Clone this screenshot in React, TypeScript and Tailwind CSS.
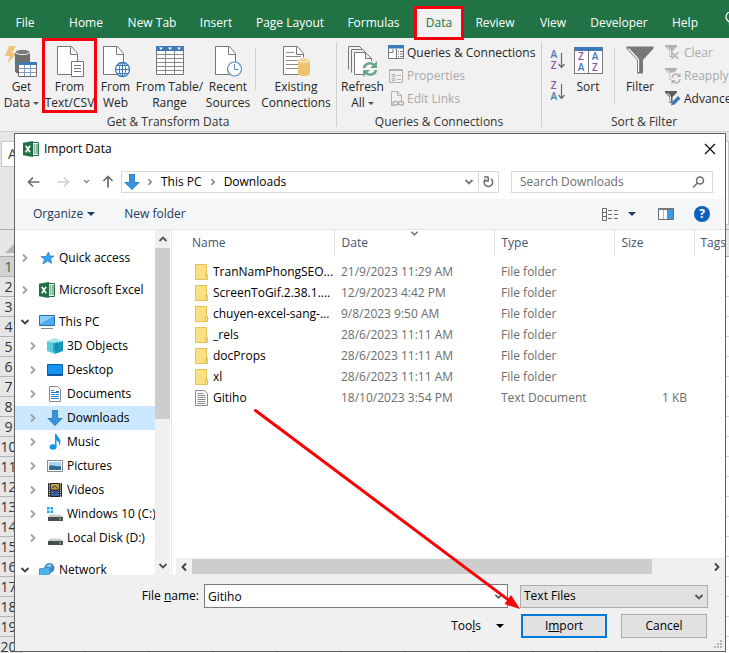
import { ReactNode, useState } from 'react';
import clsx from 'clsx';

type Kind =
  | 'star'
  | 'excel'
  | 'pc'
  | 'cube'
  | 'desktop'
  | 'documents'
  | 'downloads'
  | 'music'
  | 'pictures'
  | 'videos'
  | 'windows'
  | 'disk'
  | 'network';

interface TreeNode {
  label: string;
  kind: Kind;
  child?: boolean;
  open?: boolean;
  gap?: boolean;
}

interface FileRow {
  name: string;
  date: string;
  type: string;
  size?: string;
}

const tabs = [
  { label: 'File', width: 'w-[50px]' },
  { label: 'Home', width: 'w-[72px]' },
  { label: 'New Tab', width: 'w-[60px]' },
  { label: 'Insert', width: 'w-[68px]' },
  { label: 'Page Layout', width: 'w-[80px]' },
  { label: 'Formulas', width: 'w-[87px]' },
  { label: 'Data', width: 'w-[44px]' },
  { label: 'Review', width: 'w-[68px]' },
  { label: 'View', width: 'w-[48px]' },
  { label: 'Developer', width: 'w-[84px]' },
  { label: 'Help', width: 'w-[48px]' },
];

const tree: TreeNode[] = [
  { label: 'Quick access', kind: 'star', gap: true },
  { label: 'Microsoft Excel', kind: 'excel', gap: true },
  { label: 'This PC', kind: 'pc', open: true },
  { label: '3D Objects', kind: 'cube', child: true },
  { label: 'Desktop', kind: 'desktop', child: true },
  { label: 'Documents', kind: 'documents', child: true },
  { label: 'Downloads', kind: 'downloads', child: true },
  { label: 'Music', kind: 'music', child: true },
  { label: 'Pictures', kind: 'pictures', child: true },
  { label: 'Videos', kind: 'videos', child: true },
  { label: 'Windows 10 (C:)', kind: 'windows', child: true },
  { label: 'Local Disk (D:)', kind: 'disk', child: true, gap: true },
  { label: 'Network', kind: 'network', open: true },
];

const files: FileRow[] = [
  { name: 'TranNamPhongSEO...', date: '21/9/2023 11:29 AM', type: 'File folder' },
  { name: 'ScreenToGif.2.38.1....', date: '12/9/2023 4:42 PM', type: 'File folder' },
  { name: 'chuyen-excel-sang-...', date: '9/8/2023 9:50 AM', type: 'File folder' },
  { name: '_rels', date: '28/6/2023 11:11 AM', type: 'File folder' },
  { name: 'docProps', date: '28/6/2023 11:11 AM', type: 'File folder' },
  { name: 'xl', date: '28/6/2023 11:11 AM', type: 'File folder' },
  { name: 'Gitiho', date: '18/10/2023 3:54 PM', type: 'Text Document', size: '1 KB' },
];

const Chevron = ({ dir, className, size = 10 }: { dir: 'up' | 'down' | 'left' | 'right'; className?: string; size?: number }) => {
  const paths = {
    up: 'M1.5 7 5 3.5 8.5 7',
    down: 'M1.5 3 5 6.5 8.5 3',
    left: 'M7 1.5 3.5 5 7 8.5',
    right: 'M3 1.5 6.5 5 3 8.5',
  };
  return (
    <svg width={size} height={size} viewBox="0 0 10 10" className={clsx('shrink-0', className)} fill="none" stroke="currentColor" strokeWidth="1.8">
      <path d={paths[dir]} />
    </svg>
  );
};

const Caret = ({ className, small }: { className?: string; small?: boolean }) => (
  <svg width={small ? 6 : 8} height={small ? 3 : 4} viewBox="0 0 8 4" className={clsx('inline-block shrink-0', className)} fill="currentColor">
    <path d="M0 0h8L4 4z" />
  </svg>
);

const ExcelIcon = ({ className }: { className?: string }) => (
  <svg width="16" height="16" viewBox="0 0 16 16" className={className}>
    <path d="M9.500 1.500h6v13h-6z" fill="#fff" stroke="#217346" strokeWidth="1" />
    <path d="M10.500 4h2M10.500 6h2M10.500 8h2M10.500 10h2M10.500 12h2M13 4h2M13 6h2M13 8h2M13 10h2M13 12h2" stroke="#217346" strokeWidth="1" />
    <path d="M0 1.800 10 0v16L0 14.200z" fill="#1e7145" />
    <path d="m2.700 4.700 4.400 6.600M7.100 4.700l-4.400 6.600" stroke="#fff" strokeWidth="1.600" />
  </svg>
);

const page = 'M1.5.5h14l6 7v21h-20z';

const GetDataIcon = () => (
  <svg width="34" height="32" viewBox="0 0 34 32">
    <path d="M4 0h7L7 7h5L2 18l3-8H0z" fill="#f0c277" />
    <path d="M10 6v19c0 2 3 3 8 3l7-12V6z" fill="#6e6e6e" />
    <ellipse cx="17.500" cy="6" rx="7.500" ry="2.600" fill="#7b7b7b" stroke="#f1f1f1" />
    <path d="M13.500 16.500h18v14h-18z" fill="#fff" stroke="#6e6e6e" />
    <path d="M13 16h19v3H13z" fill="#3f79b7" />
    <path d="M14 22.500h17M14 26.500h17M19.500 19v11M25.500 19v11" stroke="#7a9cc6" />
  </svg>
);

const TextCsvIcon = () => (
  <svg width="28" height="32" viewBox="0 0 28 32">
    <path d={page} fill="#fff" stroke="#777" />
    <path d="M14.500.500v8h7" fill="none" stroke="#777" />
    <path d="M15.500 15.500h12v15h-12z" fill="#fff" stroke="#777" />
    <path d="M18 19.500h7M18 22.500h7M18 25.500h7" stroke="#777" />
  </svg>
);

const WebIcon = () => (
  <svg width="28" height="32" viewBox="0 0 28 32">
    <path d={page} fill="#fff" stroke="#777" />
    <path d="M14.500.500v8h7" fill="none" stroke="#777" />
    <circle cx="20.500" cy="23.500" r="7" fill="#fff" stroke="#3f79b7" strokeWidth="1.300" />
    <ellipse cx="20.500" cy="23.500" rx="3.200" ry="7" fill="none" stroke="#3f79b7" />
    <path d="M20.500 16.500v14M13.500 23.500h14M15 19.500h11M15 27.500h11" stroke="#3f79b7" />
  </svg>
);

const TableIcon = () => (
  <svg width="28" height="32" viewBox="0 0 28 32">
    <path d="M.500.500h27v28h-27z" fill="#fff" stroke="#777" />
    <path d="M0 0h28v5H0z" fill="#3f79b7" />
    <path d="M3 1.500h4l-2 2.500zM12 1.500h4l-2 2.500zM21 1.500h4l-2 2.500z" fill="#fff" />
    <path d="M1 8.500h26M1 12.500h26M1 16.500h26M1 20.500h26M1 24.500h26M9.500 5v23M18.500 5v23" stroke="#8a8a8a" />
  </svg>
);

const RecentIcon = () => (
  <svg width="28" height="32" viewBox="0 0 28 32">
    <path d={page} fill="#fff" stroke="#777" />
    <path d="M14.500.500v8h7" fill="none" stroke="#777" />
    <circle cx="20.500" cy="23" r="7" fill="#fff" stroke="#5b8cc4" strokeWidth="1.200" />
    <path d="M20.500 18v5.500h4" fill="none" stroke="#5b8cc4" />
  </svg>
);

const ConnectionsIcon = () => (
  <svg width="28" height="32" viewBox="0 0 28 32">
    <path d={page} fill="#fff" stroke="#777" />
    <path d="M14.500.500v8h7" fill="none" stroke="#777" />
    <path d="M4 6.500h8M4 10.500h15M4 14.500h12M4 18.500h12M4 22.500h12" stroke="#8a8a8a" />
    <path d="M16 14v14c0 1 2.500 2 6 2s6-1 6-2V14z" fill="#eec36f" />
    <ellipse cx="22" cy="14" rx="6" ry="2.200" fill="#f3d38f" stroke="#fff" strokeWidth=".800" />
  </svg>
);

const RefreshIcon = () => (
  <svg width="30" height="32" viewBox="0 0 30 32" fill="#fff" stroke="#777">
    <path d="M.500 23.500V.500h11l3 3" fill="none" />
    <path d="M3.500 26.500v-23h11l3 3" fill="none" />
    <path d="M6.500 6.500h11l6 6v16h-17zM17.500 6.500v6h6" />
    <circle cx="22" cy="23" r="8" fill="#f6f6f6" stroke="none" />
    <path d="M16 22c.5-4 6-6.500 10-3M28 24c-.5 4-6 6.500-10 3" fill="none" stroke="#6aa889" strokeWidth="2.600" />
    <path d="M29 15v7h-7zM15 31v-7h7z" fill="#6aa889" stroke="none" />
  </svg>
);

const FilterIcon = () => (
  <svg width="28" height="30" viewBox="0 0 28 30">
    <path d="M.500.500h27v2L17 14v13.500h-6V14L.500 2.500z" fill="#777" />
    <path d="M2.500 2.500 12.500 13.500V26" fill="none" stroke="#fff" strokeWidth="1.200" />
  </svg>
);

const MiniFunnel = ({ mark }: { mark: 'x' | 'loop' | 'pen' }) => {
  const color = mark === 'pen' ? '#5f5f5f' : '#b1b1b1';
  return (
    <svg width="16" height="16" viewBox="0 0 16 16" fill="none">
      <path d="M0 0h12v1.500L7.500 6v6h-3V6L0 1.500z" fill={color} />
      <path d="M2.500 2 5.500 5.500V11" stroke="#f1f1f1" />
      {mark === 'x' && <path d="m6.500 7 7 7m0-7-7 7" stroke={color} strokeWidth="1.500" />}
      {mark === 'loop' && (
        <>
          <path d="M6 4.500h10V16H6z" fill="#f1f1f1" />
          <path d="M7 10a4 4 0 0 1 7-2.500M15 11a4 4 0 0 1-7 2.500" stroke={color} strokeWidth="1.500" />
          <path d="M15.500 5v4h-4zM6.500 16v-4h4z" fill={color} />
        </>
      )}
      {mark === 'pen' && <path d="m6 14.500 1-3.500 6-6 2.500 2.500-6 6z" fill="#3f79b7" />}
    </svg>
  );
};

const SortLetters = ({ top, bottom }: { top: string; bottom: string }) => (
  <span className="flex flex-col items-center text-[10px] leading-[11px] font-semibold">
    <span className={top === 'A' ? 'text-[#3f79b7]' : 'text-[#8e4fa8]'}>{top}</span>
    <span className={bottom === 'A' ? 'text-[#3f79b7]' : 'text-[#8e4fa8]'}>{bottom}</span>
  </span>
);

const SortButton = ({ top, bottom, label }: { top: string; bottom: string; label: string }) => (
  <button aria-label={label} className="flex items-center gap-px">
    <SortLetters top={top} bottom={bottom} />
    <svg width="7" height="17" viewBox="0 0 7 17" fill="none" stroke="#6a6a6a" strokeWidth="1.200">
      <path d="M3.500 1v14M.500 12l3 3.500 3-3.500" />
    </svg>
  </button>
);

const BigButton = ({ icon, lines, width, caret, marked }: { icon: ReactNode; lines: string[]; width: string; caret?: boolean; marked?: boolean }) => (
  <button className={clsx('relative flex shrink-0 flex-col items-center pt-2', width)}>
    <span className="flex h-[33px] items-start">{icon}</span>
    {lines.map((line, i) => (
      <span key={line} className="flex items-center whitespace-nowrap leading-4">
        {line}
        {caret && i === lines.length - 1 && <Caret small className="ml-[3px] text-[#555]" />}
      </span>
    ))}
    {marked && <span className="absolute -inset-x-px top-0 h-[75px] border-3 border-[#f5000d]" />}
  </button>
);

const SmallButton = ({ icon, label, disabled }: { icon: ReactNode; label: string; disabled?: boolean }) => (
  <button disabled={disabled} className={clsx('flex h-[23px] items-center gap-[3px] whitespace-nowrap', disabled && 'text-[#a9a9a9]')}>
    {icon}
    {label}
  </button>
);

const Group = ({ title, width, children }: { title: string; width: string; children: ReactNode }) => (
  <section className={clsx('flex shrink-0 flex-col', width)}>
    <div className="flex h-[75px]">{children}</div>
    <h2 className="text-center leading-[18px] text-[#333]">{title}</h2>
  </section>
);

const Ribbon = () => (
  <header className="shrink-0 overflow-hidden bg-[#f1f1f1]">
    <nav className="flex h-[38px] bg-[#217346] pt-2 text-white">
      {tabs.map((tab) => (
        <button
          key={tab.label}
          className={clsx('relative shrink-0 whitespace-nowrap', tab.width, tab.label === 'Data' && 'bg-[#f1f1f1] text-[#217346]')}
        >
          {tab.label}
          {tab.label === 'Data' && <span className="absolute -inset-x-[3px] -top-0.5 -bottom-0.5 z-10 border-3 border-[#f5000d]" />}
        </button>
      ))}
      <svg width="14" height="18" viewBox="0 0 14 18" className="mt-1 ml-4 shrink-0" fill="none" stroke="#fff" strokeWidth="1.200">
        <path d="M4.500 13v-3C2 8.500 1 7 1 5a5.500 5.500 0 0 1 11 0c0 2-1 3.500-3.500 5v3zM5 15.500h3" />
      </svg>
    </nav>
    <div className="flex text-[#262626]">
      <Group title="Get & Transform Data" width="w-[336px]">
        <BigButton icon={<GetDataIcon />} lines={['Get', 'Data']} width="w-[43px]" caret />
        <BigButton icon={<TextCsvIcon />} lines={['From', 'Text/CSV']} width="w-[53px]" marked />
        <BigButton icon={<WebIcon />} lines={['From', 'Web']} width="w-[39px]" />
        <BigButton icon={<TableIcon />} lines={['From Table/', 'Range']} width="w-[69px]" />
        <BigButton icon={<RecentIcon />} lines={['Recent', 'Sources']} width="w-[48px]" />
        <span className="mx-[3px] mt-[10px] h-[42px] w-px bg-[#d0d0d0]" />
        <BigButton icon={<ConnectionsIcon />} lines={['Existing', 'Connections']} width="w-[74px]" />
      </Group>
      <span className="mt-1 mb-1 w-px shrink-0 bg-[#cfcfcf]" />
      <Group title="Queries & Connections" width="w-[204px]">
        <BigButton icon={<RefreshIcon />} lines={['Refresh', 'All']} width="w-[51px]" caret />
        <div className="flex flex-col pt-[3px]">
          <SmallButton
            label="Queries & Connections"
            icon={
              <svg width="16" height="15" viewBox="0 0 16 15">
                <path d="M.500.500h15v13h-15z" fill="#fff" stroke="#777" />
                <path d="M0 0h16v3.500H0z" fill="#3f79b7" />
                <path d="M8.500 4v9M1 7.500h4M10 6.500h1M12 6.500h3M10 9h1M12 9h3M10 11.500h1M12 11.500h3M5 4v3.500" stroke="#777" fill="none" />
              </svg>
            }
          />
          <SmallButton
            disabled
            label="Properties"
            icon={
              <svg width="16" height="16" viewBox="0 0 16 16" fill="none" stroke="#b1b1b1">
                <path d="M1.500 1.500h13v13h-13z" />
                <path d="M1.500 2.500h13M4 6.500h3v2H4zM4 10.500h3v2H4zM9 7.500h4M9 11.500h4" />
              </svg>
            }
          />
          <SmallButton
            disabled
            label="Edit Links"
            icon={
              <svg width="16" height="16" viewBox="0 0 16 16" fill="none" stroke="#b1b1b1">
                <path d="M6 14.500H3.500V.500h6l4 4V10M9.500.500v4h4" />
                <rect x="5" y="10.500" width="5" height="3.500" rx="1.700" strokeWidth="1.400" />
                <rect x="10.500" y="10.500" width="5" height="3.500" rx="1.700" strokeWidth="1.400" />
              </svg>
            }
          />
        </div>
      </Group>
      <span className="mt-1 mb-1 w-px shrink-0 bg-[#cfcfcf]" />
      <Group title="Sort & Filter" width="w-[204px]">
        <div className="flex w-[23px] flex-col items-end gap-[9px] pt-[11px]">
          <SortButton top="A" bottom="Z" label="Sort A to Z" />
          <SortButton top="Z" bottom="A" label="Sort Z to A" />
        </div>
        <BigButton
          lines={['Sort']}
          width="w-[46px]"
          icon={
            <span className="mt-px flex h-[27px] w-[29px] border border-t-4 border-[#777] border-t-[#3f79b7] bg-white">
              <span className="flex flex-1 justify-center border-r border-[#777]">
                <SortLetters top="Z" bottom="A" />
              </span>
              <span className="flex flex-1 justify-center">
                <SortLetters top="A" bottom="Z" />
              </span>
            </span>
          }
        />
        <span className="mr-1 mt-[10px] ml-[3px] h-[55px] w-px bg-[#d0d0d0]" />
        <BigButton icon={<FilterIcon />} lines={['Filter']} width="w-[42px]" />
        <div className="flex flex-col pt-[3px] pl-1">
          <SmallButton icon={<MiniFunnel mark="x" />} label="Clear" disabled />
          <SmallButton icon={<MiniFunnel mark="loop" />} label="Reapply" disabled />
          <SmallButton icon={<MiniFunnel mark="pen" />} label="Advanced" />
        </div>
      </Group>
    </div>
  </header>
);

const Sheet = () => (
  <div className="flex-1 overflow-hidden bg-[#e6e6e6]">
    <div className="border-t border-[#cfcfcf] pt-[9px] pb-1">
      <div className="flex items-start justify-between">
        <div className="ml-px h-[26px] w-20 border border-[#c6c6c6] bg-white pl-1.5 text-sm leading-6 text-[#444]">A1</div>
        <div className="h-[84px] w-2/3 border border-[#c6c6c6] bg-white" />
      </div>
    </div>
    <div className="flex h-[28px] border-y border-[#ababab]">
      <svg width="21" height="28" viewBox="0 0 21 28" fill="#b4b4b4">
        <path d="M18 10v13H5z" />
      </svg>
    </div>
    {Array.from({ length: 20 }, (_, i) => i + 1).map((row) => (
      <div key={row} className="flex h-5">
        <div
          className={clsx(
            'w-[22px] shrink-0 border-r border-b border-[#b5b5b5] pr-1 text-center text-sm leading-5',
            row === 1 ? 'bg-[#d2d2d2] text-[#217346]' : 'text-[#333]'
          )}
        >
          {row}
        </div>
        {Array.from({ length: 12 }, (_, c) => (
          <div key={c} className="w-16 shrink-0 border-r border-b border-[#d4d4d4] bg-white" />
        ))}
      </div>
    ))}
  </div>
);

const Arrow = ({ className }: { className?: string }) => (
  <svg width="16" height="16" viewBox="0 0 16 16" className={className}>
    <path d="M5 0h6v8h5l-8 8-8-8h5z" fill="#3b93dd" />
    <path d="M5.500.500h5v8h4.200L8 15.200 1.300 8.500h4.200z" fill="none" stroke="#2b78bd" strokeWidth=".600" />
  </svg>
);

const TreeIcon = ({ kind }: { kind: Kind }) => {
  if (kind === 'excel') return <ExcelIcon />;
  if (kind === 'downloads') return <Arrow />;
  return (
    <svg width="16" height="16" viewBox="0 0 16 16" fill="none" className="shrink-0">
      {kind === 'star' && (
        <path d="m9.500 2 1.300 4H15l-3.400 2.800 1 4.400L8.600 11l-4.800 3 1.800-4.800L2 6.500h5z" fill="#35a3f0" stroke="#1b78c8" strokeWidth=".700" />
      )}
      {kind === 'pc' && (
        <>
          <path d="M.500 1.500h15v10H.500z" fill="#4ea9ee" stroke="#2a6fa8" />
          <path d="M1 2h14L1 10z" fill="#8bd0fa" />
          <path d="M2 14.500h12" stroke="#7c8b98" />
        </>
      )}
      {kind === 'cube' && (
        <>
          <path d="m0 3 8-3 8 3-7 3z" fill="#a5e8f3" />
          <path d="m0 3 8 2.500V16l-8-3z" fill="#56cbe0" />
          <path d="m16 3-8 2.500V16l8-3z" fill="#159ab8" />
          <path d="m6 5 5-1v8l-5 2z" fill="#0e86a5" opacity=".600" />
        </>
      )}
      {kind === 'desktop' && (
        <>
          <path d="M.500 2.500h15v11H.500z" fill="#1295f2" stroke="#0a5da8" />
          <path d="M1 12.500h14" stroke="#0c4f91" />
        </>
      )}
      {kind === 'documents' && (
        <>
          <path d="M2.500.500h8l3 3v12h-11z" fill="#fff" stroke="#8a8a8a" />
          <path d="M4 4.500h3M9 5.500h3M4 6.500h8M4 8.500h4M9 8.500h3M4 10.500h8M4 12.500h8" stroke="#2d83c4" />
        </>
      )}
      {kind === 'music' && (
        <>
          <path d="M8 0h1.500c.5 3 4 4 4 7.500 0 1.500-.5 3-1.500 4 .5-3-.5-4-2.500-5V13H8z" fill="#1495ee" />
          <ellipse cx="6" cy="13" rx="3.500" ry="2.700" fill="#1495ee" />
        </>
      )}
      {kind === 'pictures' && (
        <>
          <path d="M.500 2.500h15v11H.500z" fill="#fff" stroke="#8a8a8a" />
          <path d="M2 4h12v8H2z" fill="#a8d5ef" />
          <path d="M2 8c3-2 6 1 12 0v4H2z" fill="#2f6d93" />
        </>
      )}
      {kind === 'videos' && (
        <>
          <path d="M1 1h14v14H1z" fill="#222" />
          <path d="M2.500 1v14M13.500 1v14" stroke="#e8e8e8" strokeWidth="1.200" strokeDasharray="1.200 1" />
          <path d="M4 2h8v5.500H4z" fill="#bda344" />
          <path d="M4 8.500h8V14H4z" fill="#3d62a0" />
          <path d="m5 6 3-2 3 2.500M6 12l4-3" stroke="#26355c" />
        </>
      )}
      {(kind === 'windows' || kind === 'disk') && (
        <>
          <path d="M3 8.500h10l3 2.500H1z" fill="#c9cbcc" />
          <path d="M1 11h15v4H1z" fill="#4a4d4f" />
          <path d="M12 13h2" stroke="#7be07b" />
        </>
      )}
      {kind === 'windows' && <path d="M0 1h2.500v2.500H0zM3.500 1H6v2.500H3.500zM0 4.500h2.500V7H0zM3.500 4.500H6V7H3.500z" fill="#1ea6e8" />}
      {kind === 'network' && (
        <>
          <circle cx="10.500" cy="6" r="5" fill="#3d8fc9" />
          <path d="M7.500 4c2-2 4-2 5-1l-1 3H9z" fill="#9ed3ef" />
          <path d="m0 7 11-2v7L0 14z" fill="#4fb3ec" stroke="#2b78ad" strokeWidth=".700" />
        </>
      )}
    </svg>
  );
};

const Tree = ({ selected, onSelect }: { selected: string; onSelect: (label: string) => void }) => (
  <div className="flex w-[155px] shrink-0 overflow-hidden">
    <ul className="min-w-0 flex-1 pt-4">
      {tree.map((node) => (
        <li key={node.label} className={clsx(node.gap && 'mb-2')}>
          <button
            onClick={() => onSelect(node.label)}
            className={clsx(
              'flex h-6 w-full items-center gap-[9px] whitespace-nowrap text-black',
              node.child ? 'pl-[13px]' : 'pl-[5px]',
              selected === node.label && 'bg-[#cce8ff]'
            )}
          >
            <Chevron dir={node.open ? 'down' : 'right'} className={node.open ? 'text-[#404040]' : 'text-[#a0a0a0]'} />
            <span className="flex items-center gap-1">
              <TreeIcon kind={node.kind} />
              {node.label}
            </span>
          </button>
        </li>
      ))}
    </ul>
    <div className="flex w-[15px] flex-col items-center bg-[#f0f0f0]">
      <Chevron dir="up" className="my-1 text-[#505050]" />
      <div className="h-[171px] w-full bg-[#cdcdcd]" />
      <Chevron dir="down" className="mt-auto mb-1 text-[#505050]" />
    </div>
  </div>
);

const FileIcon = ({ text }: { text?: boolean }) =>
  text ? (
    <svg width="13" height="16" viewBox="0 0 13 16" className="shrink-0" fill="none" stroke="#8a8a8a">
      <path d="M.500.500h9l3 3v12H.500z" fill="#fff" />
      <path d="M2.500 3.500h6M2.500 5.500h8M2.500 7.500h8M2.500 9.500h8M2.500 11.500h8M2.500 13.500h8" />
    </svg>
  ) : (
    <svg width="13" height="16" viewBox="0 0 13 16" className="shrink-0">
      <path d="M0 0h12v10h1v6H0z" fill="#fbdf83" />
      <path d="M.500.500h11V11M.500.500v15h12v-5h-2v5" fill="none" stroke="#e8bd4f" strokeWidth=".900" />
    </svg>
  );

const FileList = () => (
  <div className="ml-px flex min-w-0 flex-1 flex-col overflow-hidden border-l border-[#e8e8e8]">
    <table className="w-full table-fixed text-left whitespace-nowrap">
      <colgroup>
        <col className="w-[162px]" />
        <col className="w-[160px]" />
        <col className="w-[120px]" />
        <col className="w-[80px]" />
        <col />
      </colgroup>
      <thead className="text-[#44546f]">
        <tr className="h-[26px]">
          <th className="border-r border-[#e2e2e2] pl-5 font-normal">Name</th>
          <th className="relative border-r border-[#e2e2e2] pl-[7px] font-normal">
            Date
            <Chevron dir="down" size={9} className="absolute -top-px left-[75px] text-[#777]" />
          </th>
          <th className="border-r border-[#e2e2e2] pl-[7px] font-normal">Type</th>
          <th className="border-r border-[#e2e2e2] pl-[7px] font-normal">Size</th>
          <th className="pl-1.5 font-normal">Tags</th>
        </tr>
      </thead>
      <tbody className="text-[#6d6d6d]">
        <tr className="h-[5px]" />
        {files.map((file) => (
          <tr key={file.name} className="h-[21px]">
            <td className="pl-[23px] text-black">
              <span className="flex items-center gap-[5px]">
                <FileIcon text={file.type === 'Text Document'} />
                {file.name}
              </span>
            </td>
            <td className="pl-[7px]">{file.date}</td>
            <td className="pl-[7px]">{file.type}</td>
            <td className="pr-[7px] text-right">{file.size}</td>
            <td />
          </tr>
        ))}
      </tbody>
    </table>
    <div className="mt-auto ml-1 flex h-[17px] items-center bg-[#f0f0f0] text-[#404040]">
      <Chevron dir="left" className="mx-[3px]" />
      <div className="h-[15px] flex-1">
        <div className="h-full w-[89%] bg-[#cdcdcd]" />
      </div>
      <Chevron dir="right" className="mx-[3px]" />
    </div>
  </div>
);

const ImportDialog = () => {
  const [folder, setFolder] = useState('Downloads');
  const [fileName, setFileName] = useState('Gitiho');

  return (
    <div
      role="dialog"
      aria-label="Import Data"
      className="absolute top-[133px] right-[3px] bottom-px left-[14px] flex flex-col border border-[#5f6368] bg-white text-black"
    >
      <div className="flex h-[30px] shrink-0 items-center gap-[5px] pr-[9px] pl-2">
        <ExcelIcon />
        <h1>Import Data</h1>
        <button aria-label="Close" className="ml-auto">
          <svg width="12" height="12" viewBox="0 0 12 12" stroke="#000" strokeWidth="1.100">
            <path d="m1 1 10 10M11 1 1 11" />
          </svg>
        </button>
      </div>

      <div className="flex h-[35px] shrink-0 items-center pr-3 pl-3">
        <button aria-label="Back">
          <svg width="13" height="12" viewBox="0 0 13 12" fill="none" stroke="#6b6b6b" strokeWidth="1.700">
            <path d="M12.500 6h-11M6 1.500 1.500 6 6 10.500" />
          </svg>
        </button>
        <button aria-label="Forward" className="ml-[17px]">
          <svg width="13" height="12" viewBox="0 0 13 12" fill="none" stroke="#d0d0d0" strokeWidth="1.700">
            <path d="M.500 6h11M7 1.500 11.500 6 7 10.500" />
          </svg>
        </button>
        <button aria-label="Recent locations" className="ml-[13px] text-[#7a7a7a]">
          <Chevron dir="down" size={7} />
        </button>
        <button aria-label="Up" className="ml-3">
          <svg width="12" height="13" viewBox="0 0 12 13" fill="none" stroke="#6b6b6b" strokeWidth="1.700">
            <path d="M6 12.500v-11M1.500 6 6 1.500 10.500 6" />
          </svg>
        </button>
        <div className="ml-[7px] flex h-[22px] flex-1 items-center border border-[#d9d9d9] pl-0.5">
          <Arrow />
          <Chevron dir="right" size={8} className="ml-1.5 text-[#777]" />
          <button className="ml-[7px]">This PC</button>
          <Chevron dir="right" size={8} className="ml-[7px] text-[#777]" />
          <button className="ml-[7px]">{folder}</button>
          <button aria-label="Previous locations" className="mr-1 ml-auto text-[#777]">
            <Chevron dir="down" />
          </button>
          <button aria-label="Refresh" className="flex h-full w-[20px] items-center justify-center border-l border-[#d9d9d9]">
            <svg width="11" height="12" viewBox="0 0 11 12" fill="none" stroke="#6b6b6b" strokeWidth="1.500">
              <path d="M2.500 3A4.300 4.300 0 1 0 8 2.800" />
              <path d="M5 1h-4M5.200 0.500v4.500H1" />
            </svg>
          </button>
        </div>
        <div className="ml-3 flex h-[22px] w-[202px] items-center border border-[#d9d9d9] pr-[7px] pl-2">
          <input aria-label="Search Downloads" placeholder="Search Downloads" className="min-w-0 flex-1 outline-none placeholder:text-[#6d6d6d]" />
          <svg width="13" height="12" viewBox="0 0 13 12" fill="none" stroke="#6b6b6b" strokeWidth="1.500">
            <circle cx="8" cy="4.500" r="3.500" />
            <path d="M5.500 7 1 11.500" />
          </svg>
        </div>
      </div>

      <div className="flex h-[31px] shrink-0 items-center border-b border-[#e6e6e6] bg-[#f5f6f7] pr-[15px] pl-[18px] text-[#1e395b]">
        <button className="flex items-center gap-1">
          Organize
          <Caret />
        </button>
        <button className="ml-[29px]">New folder</button>
        <button aria-label="Change view" className="ml-auto flex items-center gap-[9px]">
          <svg width="17" height="13" viewBox="0 0 17 13" fill="none" stroke="#6b6b6b">
            <path d="M.500.500h4v12h-4zM.500 4.500h4M.500 8.500h4M6 2.500h4M12 2.500h4M6 6.500h4M12 6.500h4M6 10.500h4M12 10.500h4" />
          </svg>
          <Caret />
        </button>
        <button aria-label="Preview pane" className="ml-[22px]">
          <svg width="16" height="12" viewBox="0 0 16 12">
            <path d="M.500.500h15v11H.500z" fill="#fff" stroke="#6b6b6b" />
            <path d="M0 0h16v2H0z" fill="#777" />
            <path d="M9 2h6v9H9z" fill="#3b9ae8" />
            <path d="M5.500 2v9" stroke="#b5b5b5" />
          </svg>
        </button>
        <button aria-label="Help" className="ml-5 h-4 w-4 rounded-full bg-[#0b62bd] leading-4 font-bold text-white">
          ?
        </button>
      </div>

      <div className="flex min-h-0 flex-1">
        <Tree selected={folder} onSelect={setFolder} />
        <FileList />
      </div>

      <form className="shrink-0 bg-[#f0f0f0] pt-[9px] pr-[17px] pb-[13px]" onSubmit={(e) => e.preventDefault()}>
        <div className="flex items-center">
          <label htmlFor="file-name" className="ml-auto pr-[5px] pl-2">
            File <u>n</u>ame:
          </label>
          <div className="relative w-[304px]">
            <input
              id="file-name"
              value={fileName}
              onChange={(e) => setFileName(e.target.value)}
              className="h-6 w-full border border-[#7a7a7a] bg-white pr-5 pl-[3px] outline-none"
            />
            <Chevron dir="down" size={9} className="absolute top-2 right-[5px] text-[#555]" />
          </div>
          <div className="relative ml-3 w-[188px]">
            <select aria-label="File type" className="h-[23px] w-full appearance-none border border-[#adadad] bg-[#e1e1e1] pl-[3px] outline-none">
              <option>Text Files</option>
              <option>All Files</option>
            </select>
            <Chevron dir="down" className="pointer-events-none absolute top-[7px] right-1 text-[#555]" />
          </div>
        </div>
        <div className="mt-1.5 flex items-center justify-end pr-px">
          <button type="button" className="mr-[17px] flex items-center gap-[15px]">
            <span>
              Too<u>l</u>s
            </span>
            <Caret />
          </button>
          <button type="submit" className="h-6 w-[86px] border-2 border-[#0078d7] bg-[#e1e1e1]">
            I<u>m</u>port
          </button>
          <button type="button" className="ml-[14px] h-6 w-[86px] border border-[#adadad] bg-[#e1e1e1]">
            Cancel
          </button>
        </div>
      </form>
      <svg width="9" height="9" viewBox="0 0 9 9" className="absolute right-0.5 bottom-0.5" fill="#b5b5b5">
        <path d="M6 0h2v2H6zM3 3h2v2H3zM6 3h2v2H6zM0 6h2v2H0zM3 6h2v2H3zM6 6h2v2H6z" />
      </svg>
    </div>
  );
};

const App = () => (
  <div className="relative flex h-screen flex-col overflow-hidden font-['Open_Sans','Noto_Sans',sans-serif] text-xs">
    <Ribbon />
    <Sheet />
    <ImportDialog />
    {/* arrow from the chosen file to the Import button */}
    <svg width="268" height="202" viewBox="0 0 268 202" className="pointer-events-none absolute right-[207px] bottom-[43px]">
      <path d="M1.500 2.500 256 193" stroke="#fb0007" strokeWidth="3" strokeLinecap="round" />
      <path d="m266 201-15.500-5 6.500-9z" fill="#fb0007" />
    </svg>
  </div>
);

export default App;
